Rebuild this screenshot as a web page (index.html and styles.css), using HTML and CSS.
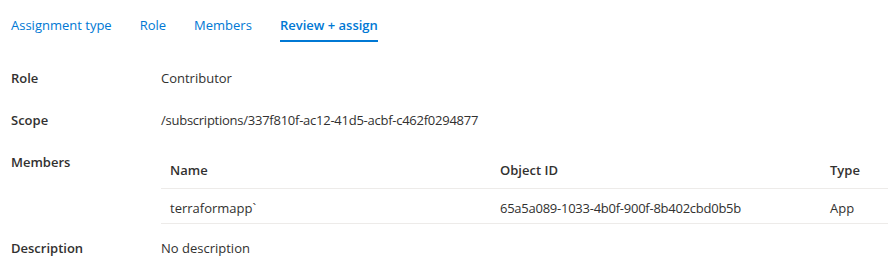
FILE: index.html
```html
<!DOCTYPE html>
<html lang="en">
<head>
<meta charset="utf-8">
<link rel="stylesheet" href="styles.css">
</head>
<body>
<nav class="tabs">
  <a class="tab">Assignment type</a>
  <a class="tab">Role</a>
  <a class="tab">Members</a>
  <a class="tab active">Review + assign</a>
</nav>
<div class="summary">
  <div class="row">
    <div class="label">Role</div>
    <div class="value">Contributor</div>
  </div>
  <div class="row">
    <div class="label">Scope</div>
    <div class="value ident">/subscriptions/337f810f-ac12-41d5-acbf-c462f0294877</div>
  </div>
  <div class="row members">
    <div class="label">Members</div>
    <table class="grid">
      <colgroup>
        <col class="c-name">
        <col class="c-id">
        <col class="c-type">
      </colgroup>
      <thead>
        <tr><th>Name</th><th>Object ID</th><th>Type</th></tr>
      </thead>
      <tbody>
        <tr><td>terraformapp`</td><td class="ident">65a5a089-1033-4b0f-900f-8b402cbd0b5b</td><td>App</td></tr>
      </tbody>
    </table>
  </div>
  <div class="row">
    <div class="label">Description</div>
    <div class="value">No description</div>
  </div>
</div>
</body>
</html>
```
FILE: styles.css
```css
html, body {
  margin: 0;
  padding: 0;
  background: #ffffff;
}
body {
  font-family: "Segoe UI", "Open Sans", "Noto Sans", sans-serif;
  font-size: 13px;
  line-height: 18px;
  color: #323130;
}
.tabs {
  display: flex;
  gap: 28px;
  padding: 0 11px;
}
.tab {
  display: block;
  color: #0078d4;
  padding: 16px 0 6px;
  border-bottom: 2px solid transparent;
  white-space: nowrap;
}
.tab.active {
  font-weight: 600;
  border-bottom-color: #0078d4;
}
.summary {
  padding: 27px 0 0 11px;
}
.row {
  display: grid;
  grid-template-columns: 150px minmax(0, 1fr);
  margin-bottom: 24px;
}
.row.members {
  margin-bottom: 15px;
}
.label {
  font-weight: 600;
}
.ident {
  letter-spacing: -0.25px;
}
.grid {
  border-collapse: collapse;
  width: 100%;
  table-layout: fixed;
}
.c-name, .c-id {
  width: 330px;
}
.grid th {
  text-align: left;
  font-weight: 600;
  padding: 8px 9px 9px;
  border-bottom: 1px solid #edebe9;
  white-space: nowrap;
}
.grid td {
  padding: 10px 9px 6px;
  border-bottom: 1px solid #edebe9;
  white-space: nowrap;
}
```
